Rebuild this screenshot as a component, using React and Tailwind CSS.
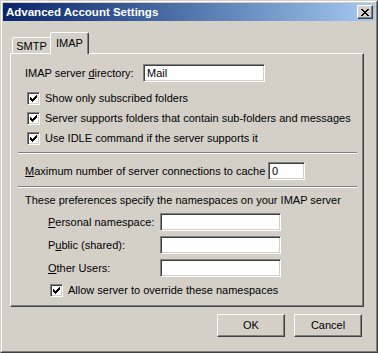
import React from "react";

const sunken =
  "border border-t-[#808080] border-l-[#808080] border-b-white border-r-white shadow-[inset_1px_1px_0_#404040,inset_-1px_-1px_0_#d4d0c8] bg-white";

function Check() {
  return (
    <div className={"w-[13px] h-[13px] shrink-0 flex items-center justify-center " + sunken}>
      <svg width="7" height="7" viewBox="0 0 7 7" shapeRendering="crispEdges">
        <path d="M0 2h1v3h-1zM1 3h1v3h-1zM2 4h1v3h-1zM3 3h1v3h-1zM4 2h1v3h-1zM5 1h1v3h-1zM6 0h1v3h-1z" fill="#000" />
      </svg>
    </div>
  );
}

function CheckRow({ children, className = "" }) {
  return (
    <div className={"flex items-center h-[20px] " + className}>
      <Check />
      <span className="ml-[5px]">{children}</span>
    </div>
  );
}

function Sep() {
  return <div className="ml-[7px] w-[339px] h-[2px] border-t border-t-[#808080] border-b border-b-white" />;
}

function Btn({ children }) {
  return (
    <div className="w-[68px] h-[23px] flex items-center justify-center border border-t-white border-l-white border-b-[#404040] border-r-[#404040] shadow-[inset_-1px_-1px_0_#808080]">
      {children}
    </div>
  );
}

export default function App() {
  return (
    <div className="w-[378px] h-[353px] bg-[#d4d0c8] text-[11px] leading-[13px] text-black font-['Liberation_Sans',Arial,sans-serif] border border-t-[#d4d0c8] border-l-[#d4d0c8] border-b-[#404040] border-r-[#404040]">
      <div className="h-full border border-t-white border-l-white border-b-[#808080] border-r-[#808080] p-px flex flex-col">
        {/* title bar */}
        <div className="h-[18px] shrink-0 flex items-center justify-between bg-gradient-to-r from-[#0a246a] to-[#a6caf0] pl-[3px] pr-[2px]">
          <span className="text-white font-bold text-[11.5px]">Advanced Account Settings</span>
          <div className="w-[16px] h-[14px] bg-[#d4d0c8] flex items-center justify-center border border-t-white border-l-white border-b-[#404040] border-r-[#404040] shadow-[inset_-1px_-1px_0_#808080]">
            <svg width="8" height="7" viewBox="0 0 8 7" shapeRendering="crispEdges">
              <path d="M0 0h2v1h-2zM6 0h2v1h-2zM1 1h2v1h-2zM5 1h2v1h-2zM2 2h4v1h-4zM3 3h2v1h-2zM2 4h4v1h-4zM1 5h2v1h-2zM5 5h2v1h-2zM0 6h2v1h-2zM6 6h2v1h-2z" fill="#000" />
            </svg>
          </div>
        </div>

        {/* tabs */}
        <div className="mt-[11px] ml-[9px] h-[21px] flex items-end relative z-10">
          <div className="w-[38px] h-[16px] flex items-center justify-center pt-[1px] border-l border-t border-white rounded-tl-[2px]">
            SMTP
          </div>
          <div className="w-[39px] h-[22px] -mb-px bg-[#d4d0c8] flex items-start justify-center pt-[4px] border-l border-t border-white border-r border-r-[#404040] shadow-[inset_-1px_0_0_#808080] rounded-t-[2px]">
            IMAP
          </div>
        </div>

        {/* panel */}
        <div className="ml-[7px] w-[354px] h-[254px] shrink-0 border border-t-white border-l-white border-b-[#404040] border-r-[#404040] shadow-[inset_-1px_-1px_0_#808080] flex flex-col">
          <div className="mt-[10px] ml-[14px] flex items-center h-[18px]">
            <span className="w-[118px]">
              IMAP server <span className="underline">d</span>irectory:
            </span>
            <div className={"w-[122px] h-[18px] flex items-center pl-[3px] " + sunken}>Mail</div>
          </div>
          <div className="mt-[6px] ml-[16px] flex flex-col">
            <CheckRow>Show only subscribed folders</CheckRow>
            <CheckRow>Server supports folders that contain sub-folders and messages</CheckRow>
            <CheckRow>Use IDLE command if the server supports it</CheckRow>
          </div>
          <div className="mt-[4px]">
            <Sep />
          </div>
          <div className="mt-[8px] ml-[14px] flex items-center h-[18px]">
            <span className="w-[243px]">
              <span className="underline">M</span>aximum number of server connections to cache
            </span>
            <div className={"w-[37px] h-[18px] flex items-center pl-[3px] " + sunken}>0</div>
          </div>
          <div className="mt-[6px]">
            <Sep />
          </div>
          <div className="mt-[6px] ml-[14px] h-[13px]">These preferences specify the namespaces on your IMAP server</div>
          <div className="mt-[6px] ml-[37px] flex flex-col gap-[5px]">
            <div className="flex items-center h-[18px]">
              <span className="w-[112px]">
                <span className="underline">P</span>ersonal namespace:
              </span>
              <div className={"w-[121px] h-[18px] " + sunken} />
            </div>
            <div className="flex items-center h-[18px]">
              <span className="w-[112px]">
                P<span className="underline">u</span>blic (shared):
              </span>
              <div className={"w-[121px] h-[18px] " + sunken} />
            </div>
            <div className="flex items-center h-[18px]">
              <span className="w-[112px]">
                <span className="underline">O</span>ther Users:
              </span>
              <div className={"w-[121px] h-[18px] " + sunken} />
            </div>
          </div>
          <CheckRow className="mt-[3px] ml-[39px]">Allow server to override these namespaces</CheckRow>
        </div>

        {/* buttons */}
        <div className="mt-[7px] flex justify-end gap-[9px] pr-[13px]">
          <Btn>OK</Btn>
          <Btn>Cancel</Btn>
        </div>
      </div>
    </div>
  );
}
